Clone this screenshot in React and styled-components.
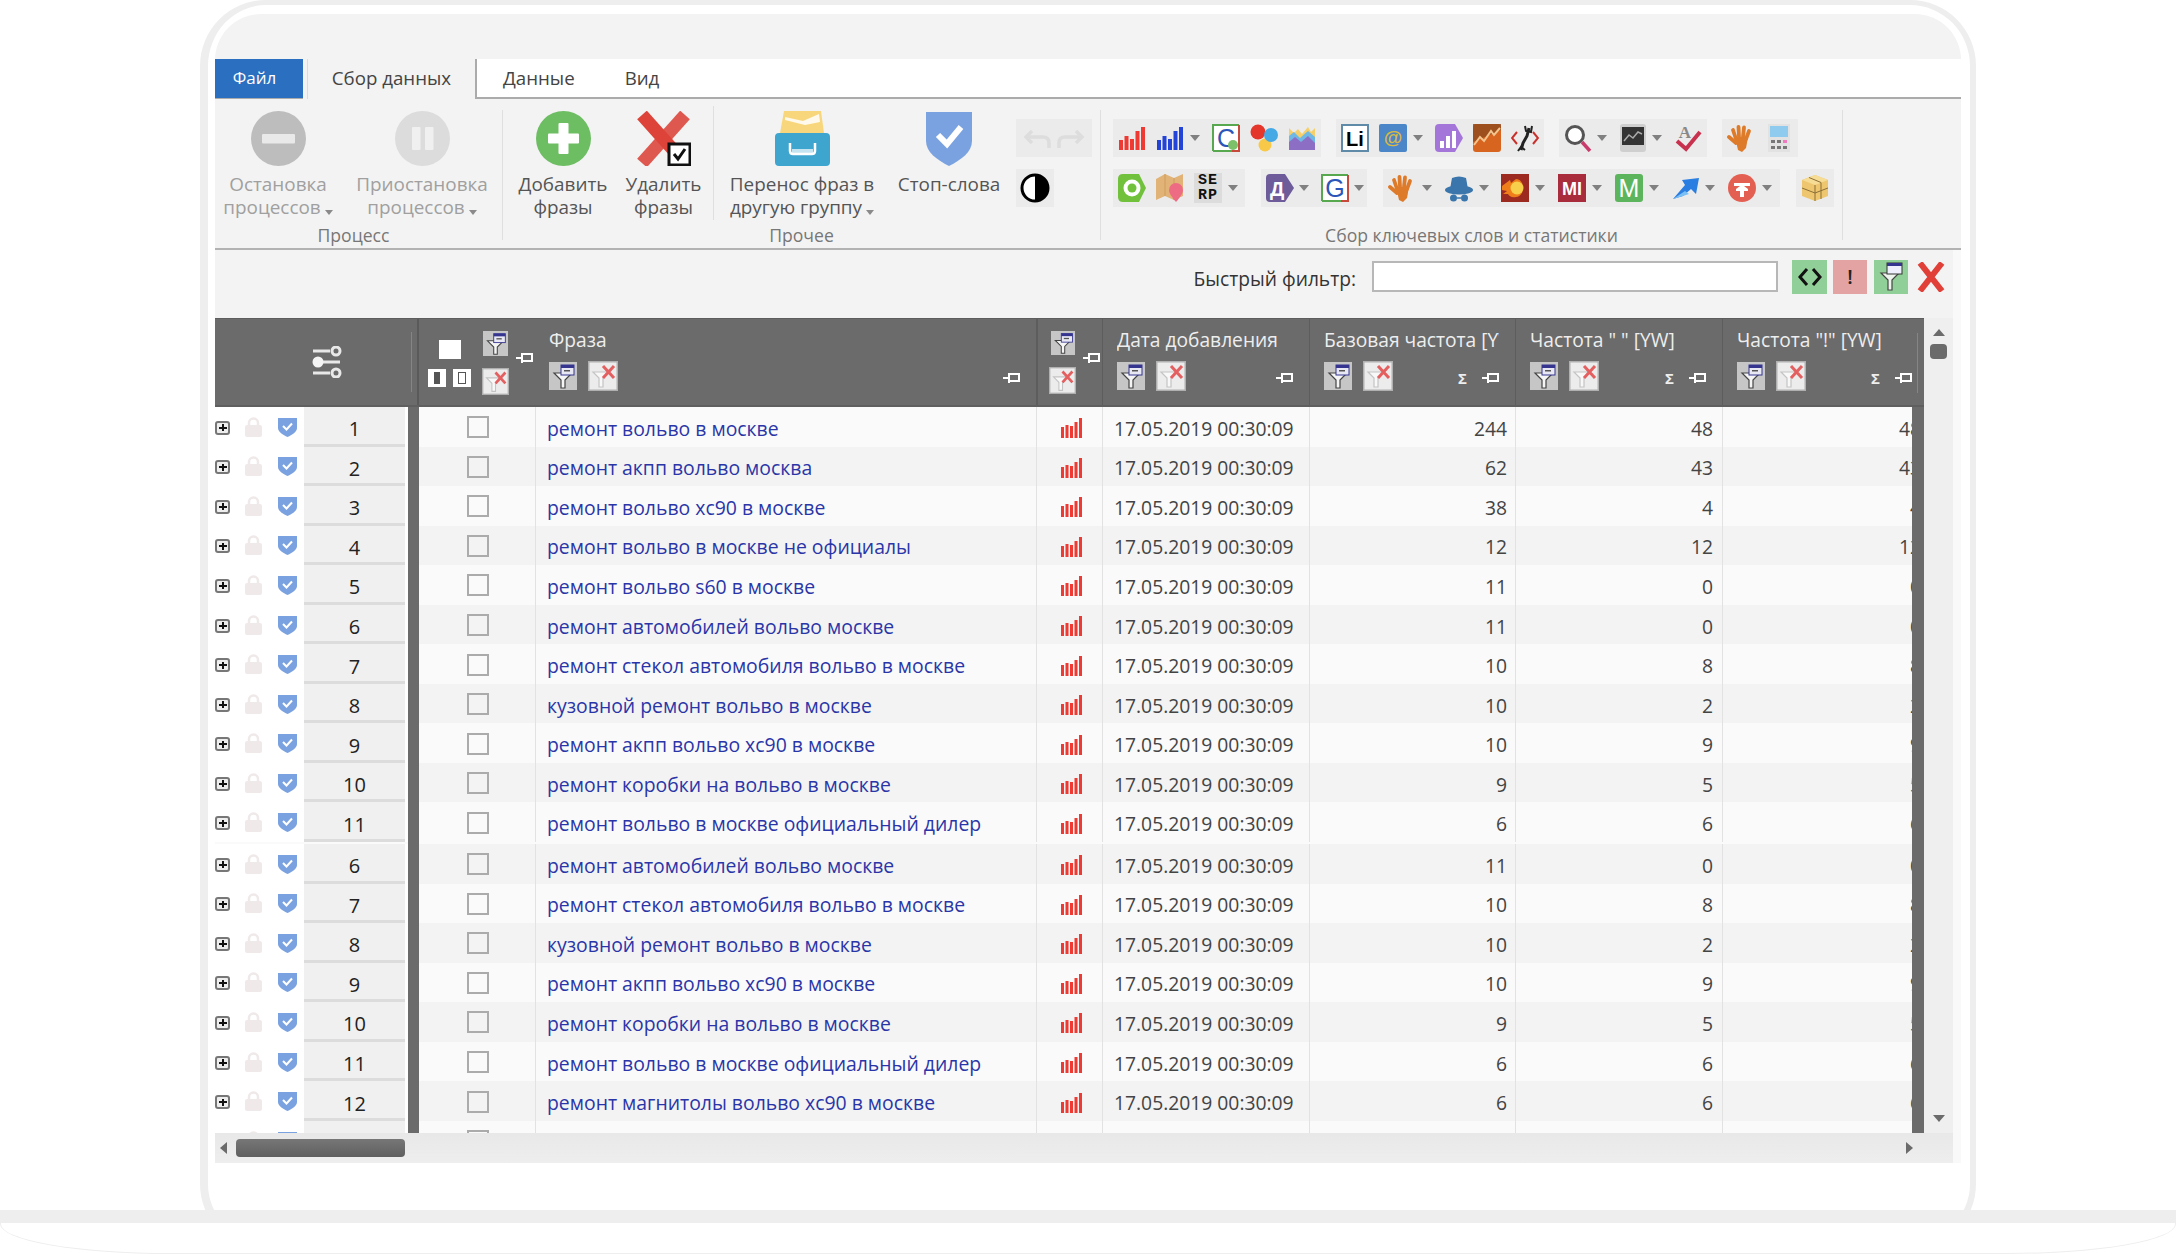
import React from "react";
import styled, { createGlobalStyle } from "styled-components";

const Global = createGlobalStyle`
  html, body { margin: 0; padding: 0; background: #fff; }
  body { width: 2176px; height: 1254px; overflow: hidden; font-family: "Open Sans", "Noto Sans", sans-serif; }
  #root { width: 2176px; height: 1254px; }
  * { box-sizing: border-box; }
  svg { display: block; flex: none; }
`;

const Page = styled.div`width: 2176px; height: 1254px; background: #fff; overflow: hidden;`;
const FrameClip = styled.div`height: 1210px; padding: 0 200px; overflow: hidden;`;
const Frame = styled.div`
  width: 1776px; height: 1250px;
  border: solid #eeeeee; border-width: 5px 6px 8px 8px; border-radius: 66px;
  padding: 9px 9px 0 7px; background: #fff;
`;
const Window = styled.div`width: 1746px; background: #f3f3f3; border-radius: 46px 46px 0 0;`;
const BaseBar = styled.div`height: 13px; background: #eeeeee;`;
const BaseFoot = styled.div`
  height: 31px; background: #fff; border: 1px solid #eeeeee; border-top: none;
  border-radius: 0 0 170px 170px / 0 0 30px 30px;
`;

const TitleGap = styled.div`height: 45px;`;
const TabBar = styled.div`
  height: 40px; background: #fff; border-bottom: 2px solid #ababab;
  display: flex; align-items: stretch; font-size: 18.7px; line-height: 38px; color: #444;
`;
const FileTab = styled.div`
  width: 88px; margin-bottom: -1px; background: #2b6fc1; color: #fff; text-align: center; font-size: 17px;
  padding-right: 9px;
`;
const TabSpacer = styled.div`width: 4px; background: #f3f3f3; margin-bottom: -2px;`;
const ActiveTab = styled.div`
  width: 170px; margin-bottom: -2px; background: #f3f3f3; color: #444; text-align: center;
  border-left: 1px solid #dcdcdc; border-right: 2px solid #ababab;
`;
const PlainTab = styled.div`margin-left: ${p => p.$ml}px;`;

const Ribbon = styled.div`
  height: 151px; padding-top: 11px; display: flex; align-items: flex-start;
  border-bottom: 2px solid #b2b2b2; background: #f3f3f3;
`;
const Group = styled.div`
  width: ${p => p.$w}px; height: 130px; border-right: 1px solid #dfdfdf; flex: none;
`;
const GroupBody = styled.div`height: 113px; display: flex; align-items: flex-start; padding-left: ${p => p.$pl || 0}px;`;
const GroupLabel = styled.div`
  font-size: 17.6px; line-height: 24px; color: #777; text-align: center; padding-right: ${p => p.$pr || 0}px;
`;
const BigButton = styled.div`
  width: ${p => p.$w}px; flex: none; display: flex; flex-direction: column; align-items: center;
  color: ${p => (p.$off ? "#a0a0a0" : "#555")};
  font-size: 18.9px; line-height: 23px; text-align: center; white-space: nowrap;
  margin-left: ${p => p.$ml || 0}px;
  svg { margin-bottom: 7px; margin-top: 1px; }
`;
const Caret = styled.span`
  display: inline-block; width: 0; height: 0; margin-left: 4px; vertical-align: -1px;
  border-left: 4px solid transparent; border-right: 4px solid transparent; border-top: 5px solid #8a8a8a;
`;
const InnerRule = styled.div`width: 1px; height: 114px; margin: -4px 0 0 9px; background: #dfdfdf; flex: none;`;
const SmallStack = styled.div`display: flex; flex-direction: column; gap: 12px; padding-top: 9px; margin-left: 8px; align-items: flex-start;`;
const ToolRows = styled.div`display: flex; flex-direction: column; gap: 12px; padding-top: 9px;`;
const ToolRow = styled.div`display: flex; gap: ${p => p.$gap || 15}px;`;
const ToolGroup = styled.div`
  height: 38px; width: ${p => p.$w}px; background: #ebebeb; display: flex; align-items: center; flex: none;
`;
const Tool = styled.div`width: ${p => p.$w || 38}px; height: 38px; flex: none; display: flex; align-items: center; justify-content: center;`;
const Drop = styled.div`
  flex: 1; height: 38px; display: flex; align-items: center; justify-content: center; padding-right: 7px;
  &::after {
    content: ""; width: 0; height: 0; border-left: 5px solid transparent; border-right: 5px solid transparent;
    border-top: 6px solid #808080;
  }
`;

const Main = styled.div`border-right: 8px solid #f9f9f9;`;
const FilterBar = styled.div`
  height: 68px; display: flex; align-items: center; justify-content: flex-end; padding: 0 8px 15px 0; background: #f3f3f3;
`;
const FilterLabel = styled.div`font-size: 19.2px; color: #333; margin-right: 16px; padding-top: 3px;`;
const FilterInput = styled.div`width: 406px; height: 31px; background: #fff; border: 2px solid #b7b7b7; margin-right: 14px;`;
const FilterBtn = styled.div`
  width: ${p => p.$w}px; height: 34px; margin-right: ${p => p.$mr}px; background: ${p => p.$bg};
  display: flex; align-items: center; justify-content: center;
  font-size: 20px; font-weight: 600; color: #222;
`;
const FilterClose = styled.div`width: 28px; height: 34px; display: flex; align-items: center; justify-content: center;`;

const TableRow = styled.div`display: flex; height: 815px;`;
const TableArea = styled.div`width: 1709px; flex: none; display: flex; flex-direction: column; overflow: hidden;`;
const cols = "204px 117px 501px 66px 207px 206px 207px 201px";
const HeadRow = styled.div`
  height: 89px; flex: none; display: grid; grid-template-columns: ${cols}; background: #6b6b6b;
  border-top: 1px solid #5d5d5d; border-bottom: 2px solid #5f5f5f;
`;
const HeadCell = styled.div`
  position: relative; min-width: 0; padding: 7px ${p => p.$pr ?? 14}px 0 ${p => p.$pl ?? 14}px; color: #eeeeee;
  border-right: ${p => (p.$noline ? "none" : "1px solid #5d5d5d")};
`;
const GutterHead = styled.div`
  display: flex; align-items: center; padding-left: 97px; border-right: 2px solid #5a5a5a;
`;
const HeadRule = styled.div`width: 1px; height: 60px; margin-left: auto; margin-right: 5px; background: #858585;`;
const HeadTitle = styled.div`font-size: 19.2px; line-height: 28px; white-space: nowrap; overflow: hidden; height: 28px;`;
const HeadTools = styled.div`display: flex; align-items: center; height: 30px; margin-top: 7px; gap: 11px;`;
const HeadEnd = styled.div`display: flex; align-items: center; gap: 15px; margin-left: auto; padding-top: 4px; font-size: 15px; line-height: 20px; font-weight: 700;`;
const CheckHead = styled.div`display: flex; align-items: flex-start; padding: 12px 0 0 9px;`;
const ChartHead = styled(CheckHead)`border-left: 1px solid #5d5d5d; border-right: 1px solid #5d5d5d; padding-left: 11px;`;
const SquareStack = styled.div`width: 43px; display: flex; flex-direction: column; align-items: center; padding-top: 9px;`;
const BigSquare = styled.div`width: 22px; height: 19px; background: #fff;`;
const SmallSquares = styled.div`display: flex; justify-content: space-between; width: 100%; margin-top: 10px;`;
const SmallSquare = styled.div`
  width: 18px; height: 18px; background: #fff; display: flex; align-items: center; justify-content: center;
  &::after { content: ""; width: ${p => p.$w}px; height: 10px; background: ${p => p.$fill}; border: 1px solid #555; }
`;
const FunnelStack = styled.div`display: flex; flex-direction: column; align-items: center; gap: 12px; width: 27px; margin-left: ${p => p.$ml ?? 11}px;`;
const PinSlot = styled.div`margin-left: 7px; padding-top: 20px;`;
const EdgeRule = styled.div`position: absolute; right: 6px; top: 14px; width: 1px; height: 60px; background: #858585;`;

const Body = styled.div`position: relative; flex: 1; overflow: hidden; background: #fafafa;`;
const DarkEdge = styled.div`position: absolute; top: 0; bottom: 0; right: 0; width: 12px; background: #6b6b6b;`;
const DarkGutterEdge = styled.div`position: absolute; top: 0; bottom: 0; left: 193px; width: 11px; background: #6b6b6b;`;
const Row = styled.div`
  display: grid; grid-template-columns: ${cols}; height: 39.55px; margin-top: ${p => (p.$gap ? 2 : 0)}px;
  background: ${p => (p.$alt ? "#f3f3f3" : "#fafafa")}; font-size: 19.3px; color: #444;
`;
const GutterCell = styled.div`display: flex; background: #fff; height: 100%;`;
const GutterIcons = styled.div`width: 89px; display: flex; align-items: center; gap: 15px; flex: none;`;
const PlusBox = styled.div`
  width: 15px; height: 14px; margin-top: 2px; border: 2px solid #777; border-radius: 3px; background: #eee; position: relative; flex: none;
  &::before { content: ""; position: absolute; left: 1.5px; right: 1.5px; top: 4px; height: 2px; background: #111; }
  &::after { content: ""; position: absolute; top: 1.5px; bottom: 1.5px; left: 4.5px; width: 2px; background: #111; }
`;
const NumCell = styled.div`
  width: 101px; flex: none; background: #f0f0f0; border-bottom: 3px solid #dcdcdc;
  display: flex; align-items: center; justify-content: center; font-size: 20px; color: #222; padding-top: 7px;
`;
const Cell = styled.div`
  display: flex; align-items: center; min-width: 0; overflow: hidden; white-space: nowrap;
  border-right: ${p => (p.$noline ? "none" : "1px solid #e2e2e2")};
  justify-content: ${p => p.$j || "flex-start"};
  padding: 3px ${p => p.$pr || 0}px 0 ${p => p.$pl || 0}px;
  color: ${p => p.$c || "inherit"};
  font-size: ${p => p.$fs || 19.3}px;
`;
const CheckBox = styled.div`width: 22px; height: 22px; border: 2px solid #ababab; margin-top: -2px; background: transparent;`;

const VScroll = styled.div`width: 29px; flex: none; background: #efefef; display: flex; flex-direction: column; align-items: center;`;
const ArrowUp = styled.div`margin-top: 11px; width: 0; height: 0; border-left: 6px solid transparent; border-right: 6px solid transparent; border-bottom: 7px solid #6b6b6b;`;
const ArrowDown = styled.div`margin-top: auto; margin-bottom: 11px; width: 0; height: 0; border-left: 6px solid transparent; border-right: 6px solid transparent; border-top: 7px solid #6b6b6b;`;
const VThumb = styled.div`margin-top: 8px; width: 17px; height: 15px; border-radius: 4px; background: #6b6b6b;`;
const HScroll = styled.div`
  height: 30px; display: flex; align-items: center; padding: 0 40px 0 5px;
  background: linear-gradient(#e8e8e8, #eeeeee);
`;
const ArrowLeft = styled.div`width: 0; height: 0; border-top: 6px solid transparent; border-bottom: 6px solid transparent; border-right: 7px solid #6b6b6b;`;
const ArrowRight = styled.div`margin-left: auto; width: 0; height: 0; border-top: 6px solid transparent; border-bottom: 6px solid transparent; border-left: 7px solid #6b6b6b;`;
const HThumb = styled.div`margin-left: 9px; width: 169px; height: 18px; border-radius: 4px; background: linear-gradient(#777, #5f5f5f);`;

/* ---------- big ribbon icons ---------- */
const IcStop = () => (<svg width="55" height="55" viewBox="0 0 55 55"><circle cx="27.5" cy="27.5" r="27.5" fill="#bdbdbd"/><rect x="11" y="23" width="33" height="9.5" rx="1" fill="#e9e9e9"/></svg>);
const IcPause = () => (<svg width="55" height="55" viewBox="0 0 55 55"><circle cx="27.5" cy="27.5" r="27.5" fill="#dcdcdc"/><rect x="17" y="16" width="8.5" height="23" rx="1" fill="#f0f0f0"/><rect x="30" y="16" width="8.5" height="23" rx="1" fill="#f0f0f0"/></svg>);
const IcAdd = () => (<svg width="55" height="55" viewBox="0 0 55 55"><circle cx="27.5" cy="27.5" r="27.5" fill="#6dbd63"/><rect x="12" y="22.5" width="31" height="10" rx="1" fill="#fff"/><rect x="22.5" y="12" width="10" height="31" rx="1" fill="#fff"/></svg>);
const IcDelete = () => (<svg width="55" height="55" viewBox="0 0 55 55"><path d="M6 4 L49 52" stroke="#dd4339" strokeWidth="13"/><path d="M49 4 L6 52" stroke="#dd4339" strokeWidth="13" opacity=".88"/><rect x="33" y="33" width="21" height="21" fill="#fff" stroke="#111" strokeWidth="3"/><path d="M38 43 l4 5 l7 -10" fill="none" stroke="#111" strokeWidth="3"/></svg>);
const IcMove = () => (<svg width="55" height="55" viewBox="0 0 55 55"><path d="M9 0 H46 L49 22 H5 Z" fill="#f8d77c"/><path d="M10 6 L28 10 L44 3 L45 11 L30 14 L10 9 Z" fill="#fff" opacity=".85"/><rect x="0" y="22" width="55" height="33" rx="4" fill="#3ea5cf"/><path d="M15 32 V40 Q15 43 18 43 H37 Q40 43 40 40 V32" fill="none" stroke="#fff" strokeWidth="2.5"/><rect x="17" y="38" width="21" height="4" fill="#fff" opacity=".7"/></svg>);
const IcShield = () => (<svg width="48" height="55" viewBox="0 0 48 55"><path d="M1 1 H47 V30 C47 41 36 49 24 55 C12 49 1 41 1 30 Z" fill="#7ba2e0"/><path d="M13 24 L22 33 L36 16" fill="none" stroke="#fff" strokeWidth="6"/></svg>);

/* ---------- small icons ---------- */
const Bars = ({ c }) => (<svg width="28" height="28" viewBox="0 0 28 28"><g fill={c}><rect x="1" y="16" width="4" height="10"/><rect x="6.5" y="12" width="4" height="14"/><rect x="12" y="15" width="4" height="11"/><rect x="17.5" y="7" width="4" height="19"/><rect x="23" y="3" width="4" height="23"/></g></svg>);
const IcSquareC = ({ ch, dot }) => (<svg width="28" height="28" viewBox="0 0 28 28"><rect x="1" y="1" width="26" height="26" fill="#fff"/><path d="M1 27 V1 H27" fill="none" stroke="#58a84f" strokeWidth="2"/><path d="M1 27 H20" stroke="#58a84f" strokeWidth="2"/><path d="M27 1 V27 H20" fill="none" stroke="#c84a3c" strokeWidth="2"/><text x="14" y="23" textAnchor="middle" fontFamily="Liberation Sans" fontSize="25" fill="#2b55b8">{ch}</text>{dot && <circle cx="21" cy="21" r="5" fill="#7cc06a"/>}</svg>);
const IcColors = () => (<svg width="28" height="28" viewBox="0 0 28 28"><circle cx="15" cy="21" r="6.5" fill="#f8c948"/><circle cx="8" cy="8" r="7.5" fill="#e5362c"/><circle cx="21" cy="11" r="7" fill="#45a9e6"/></svg>);
const IcWaves = () => (<svg width="28" height="28" viewBox="0 0 28 28"><path d="M1 26 V4 L6 9 L10 5 L14 10 L20 3 L23 8 L27 4 V26 Z" fill="#f4cf6a"/><path d="M1 26 V12 L6 8 L12 14 L20 7 L27 13 V26 Z" fill="#6fb7e4"/><path d="M1 26 V18 L7 13 L13 18 L20 12 L27 19 V26 Z" fill="#8c6fc4"/></svg>);
const IcLi = () => (<svg width="28" height="28" viewBox="0 0 28 28"><rect x="1" y="1" width="26" height="26" fill="#fff" stroke="#5f8aa8" strokeWidth="2"/><text x="14" y="22" textAnchor="middle" fontFamily="Liberation Sans" fontWeight="700" fontSize="20" fill="#000">Li</text></svg>);
const IcAt = () => (<svg width="28" height="28" viewBox="0 0 28 28"><rect width="28" height="28" rx="2" fill="#4a86c8"/><text x="14" y="20" textAnchor="middle" fontFamily="Liberation Sans" fontWeight="700" fontSize="19" fill="#dcb93f">@</text></svg>);
const IcPurple = () => (<svg width="28" height="28" viewBox="0 0 28 28"><path d="M4 0 H20 L28 14 L20 28 H4 Q0 28 0 24 V4 Q0 0 4 0 Z" fill="#a476da"/><g fill="#fff"><rect x="5" y="17" width="4" height="7"/><rect x="11" y="12" width="4" height="12"/><rect x="17" y="7" width="4" height="17"/></g></svg>);
const IcTrend = () => (<svg width="28" height="28" viewBox="0 0 28 28"><rect width="28" height="28" rx="3" fill="#d8651f"/><path d="M0 0 H28 V6 L0 18 Z" fill="#8f4a1d" opacity=".8"/><path d="M1 21 L7 13 L11 17 L18 7 L21 11 L27 4" fill="none" stroke="#f3c48e" strokeWidth="2"/></svg>);
const IcWrench = () => (<svg width="28" height="28" viewBox="0 0 28 28"><path d="M6 8 L1 14 L6 20 M22 8 L27 14 L22 20" fill="none" stroke="#c9302c" strokeWidth="2"/><path d="M18 4 L16 12 L12 19 L10 26" fill="none" stroke="#222" strokeWidth="3"/><path d="M14 2 L15 7 L20 8 L21 2 M7 27 L10 23 L14 26" fill="none" stroke="#222" strokeWidth="2"/></svg>);
const IcSearch = () => (<svg width="28" height="28" viewBox="0 0 28 28"><circle cx="11" cy="11" r="8.5" fill="#fff" stroke="#555" strokeWidth="3"/><path d="M18 18 L26 27" stroke="#c93b6d" strokeWidth="3.5"/></svg>);
const IcMonitor = () => (<svg width="28" height="28" viewBox="0 0 28 28"><rect x="1" y="0" width="26" height="28" rx="3" fill="#cfcfcf"/><rect x="3" y="3" width="22" height="18" fill="#333"/><path d="M5 17 L10 11 L14 14 L19 8 L23 10" fill="none" stroke="#aaa" strokeWidth="1.5"/></svg>);
const IcCheckA = () => (<svg width="28" height="28" viewBox="0 0 28 28"><text x="11" y="14" textAnchor="middle" fontFamily="Liberation Serif" fontWeight="700" fontSize="17" fill="#888">A</text><path d="M3 17 L12 25 L26 8" fill="none" stroke="#c8324f" strokeWidth="4"/></svg>);
const IcHand = () => (<svg width="28" height="28" viewBox="0 0 28 28"><g fill="none" stroke="#de7b2a" strokeWidth="3.8" strokeLinecap="round"><path d="M9 15 L6 6"/><path d="M12 13 L11.5 3"/><path d="M16 13 L17 3.5"/><path d="M19 15 L22 7"/><path d="M9 19 L2 13"/></g><path d="M8 13 H21 L19 24 L15 28 L11 26 Z" fill="#de7b2a"/></svg>);
const IcCalc = () => (<svg width="28" height="28" viewBox="0 0 28 28"><rect x="3" y="0" width="22" height="28" fill="#e2e2e2"/><rect x="5" y="2" width="18" height="11" fill="#8fcbef"/><g fill="#777"><rect x="6" y="16" width="4" height="3"/><rect x="12" y="16" width="4" height="3"/><rect x="6" y="22" width="4" height="3"/><rect x="12" y="22" width="4" height="3"/><rect x="18" y="22" width="4" height="3"/></g><rect x="18" y="16" width="4" height="3" fill="#ef7ac0"/></svg>);
const IcOk = () => (<svg width="28" height="28" viewBox="0 0 28 28"><path d="M5 0 H21 L28 14 L21 28 H5 Q0 28 0 23 V5 Q0 0 5 0 Z" fill="#71c13c"/><circle cx="14" cy="14" r="8.5" fill="#fff"/><circle cx="14" cy="14" r="4.5" fill="#71c13c"/></svg>);
const IcMap = () => (<svg width="28" height="28" viewBox="0 0 28 28"><path d="M0 5 L9 0 L18 4 L27 0 V22 L18 26 L9 22 L0 26 Z" fill="#e1b377"/><path d="M9 0 V22 M18 4 V26" stroke="#cf9c5e" strokeWidth="1"/><path d="M20 28 C15 22 13 19 13 16 A7 7 0 0 1 27 16 C27 19 25 22 20 28 Z" fill="#ee6b84"/></svg>);
const SerpText = styled.div`
  width: 28px; height: 30px; background: #dcdcdc; color: #111; font: 700 15px/15px "Liberation Mono", monospace;
  text-align: center; letter-spacing: 1px;
`;
const IcSerp = () => (<SerpText>SE<br/>RP</SerpText>);
const IcD = () => (<svg width="28" height="28" viewBox="0 0 28 28"><path d="M4 0 H19 L28 14 L19 28 H4 Q0 28 0 24 V4 Q0 0 4 0 Z" fill="#6d5b9a"/><text x="11" y="22" textAnchor="middle" fontFamily="Liberation Sans" fontWeight="700" fontSize="20" fill="#fff">Д</text></svg>);
const IcHat = () => (<svg width="28" height="28" viewBox="0 0 28 28"><path d="M7 4 Q14 1 21 4 L23 15 H5 Z" fill="#3a76ac"/><ellipse cx="14" cy="16" rx="14" ry="4.5" fill="#3a76ac"/><circle cx="8.5" cy="24" r="3.5" fill="#3a76ac"/><circle cx="19.5" cy="24" r="3.5" fill="#3a76ac"/><path d="M12 24 H16" stroke="#3a76ac" strokeWidth="1.5"/></svg>);
const IcFire = () => (<svg width="28" height="28" viewBox="0 0 28 28"><rect width="28" height="28" fill="#9c2a20"/><path d="M1 12 L9 6 L10 9 L15 5 C24 5 25 22 15 23 C11 24 8 22 7 20 L2 20 L6 17 L1 16 Z" fill="#ef7d1a"/><circle cx="16" cy="14" r="6.5" fill="#f8cf4a"/></svg>);
const IcMi = () => (<svg width="28" height="28" viewBox="0 0 28 28"><rect width="28" height="28" fill="#a82c3c"/><text x="14" y="21" textAnchor="middle" fontFamily="Liberation Sans" fontWeight="700" fontSize="18" fill="#fff">MI</text></svg>);
const IcM = () => (<svg width="28" height="28" viewBox="0 0 28 28"><rect width="28" height="28" rx="3" fill="#5cb55c"/><text x="14" y="23" textAnchor="middle" fontFamily="Liberation Sans" fontSize="25" fill="#fff">M</text></svg>);
const IcArrowUp = () => (<svg width="28" height="28" viewBox="0 0 28 28"><path d="M1 25 L13 11 L10 6 L27 4 L24 20 L19 15 L11 22 Z" fill="#2a7de1"/><path d="M1 25 L13 17 L17 20 L11 22 Z" fill="#7bc0f5"/></svg>);
const IcTCircle = () => (<svg width="28" height="28" viewBox="0 0 28 28"><circle cx="14" cy="14" r="14" fill="#e35f52"/><path d="M6 9 H22 V12 H16 L20 15 V17 H16 V23 H12 V17 H8 V15 L12 12 H6 Z" fill="#fff"/></svg>);
const IcBox = () => (<svg width="28" height="28" viewBox="0 0 28 28"><path d="M14 1 L27 6 V22 L14 27 L1 22 V6 Z" fill="#edc66f"/><path d="M1 6 L14 11 L27 6 L14 1 Z" fill="#f6dc94"/><path d="M1 14 L14 19 L27 14 M8 3.5 L20 8.5 V25 M14 11 V27" fill="none" stroke="#8b6f37" strokeWidth="1"/></svg>);
const IcUndo = () => (<svg width="62" height="28" viewBox="0 0 62 28"><g fill="none" stroke="#dddddd" strokeWidth="3.5"><path d="M3 13 H20 Q26 13 26 19 V24"/><path d="M9 7 L3 13 L9 19"/><path d="M59 13 H42 Q36 13 36 19 V24"/><path d="M53 7 L59 13 L53 19"/></g></svg>);
const IcContrast = () => (<svg width="30" height="30" viewBox="0 0 30 30"><circle cx="15" cy="15" r="13" fill="#fff" stroke="#000" strokeWidth="3"/><path d="M15 2 A13 13 0 0 1 15 28 Z" fill="#000"/></svg>);

/* ---------- grid icons ---------- */
const Funnel = ({ s = 28 }) => (<svg width={s} height={s} viewBox="0 0 28 28"><rect width="28" height="28" fill="#c6c6c6"/><path d="M5 11 H23 L16 18 V26 H12 V18 Z" fill="#f5f5f5" stroke="#444" strokeWidth="1.2"/><rect x="12" y="3" width="13" height="10" fill="#e8e8f4" stroke="#35358f" strokeWidth="1"/><rect x="12" y="3" width="13" height="3" fill="#35358f"/><rect x="15" y="8" width="6" height="1.5" fill="#555"/></svg>);
const FunnelX = ({ s = 30 }) => (<svg width={s} height={s} viewBox="0 0 30 30"><rect x=".75" y=".75" width="28.5" height="28.5" fill="#ececec" stroke="#b0b0b0" strokeWidth="1.5"/><path d="M5 11 H20 L15 17 V26 H11 V17 Z" fill="#f8f8f8" stroke="#c4c4c4" strokeWidth="1.2"/><path d="M15 5 L26 17 M26 5 L15 17" stroke="#e46060" strokeWidth="3"/></svg>);
const Pin = () => (<svg width="17" height="14" viewBox="0 0 17 14"><path d="M0 7 H5" stroke="#fff" strokeWidth="2"/><path d="M6 2 V12" stroke="#fff" strokeWidth="2"/><rect x="6" y="3" width="10" height="7" fill="none" stroke="#fff" strokeWidth="2"/></svg>);
const Sliders = () => (<svg width="30" height="32" viewBox="0 0 30 32"><g stroke="#e8e8e8" fill="none" strokeWidth="3"><path d="M1 5 H18"/><circle cx="24" cy="5" r="4"/><path d="M10 16 H28"/><path d="M1 27 H18"/><circle cx="24" cy="27" r="4"/></g><circle cx="6" cy="16" r="5.5" fill="#f4f4f4"/></svg>);
const Lock = () => (<svg width="17" height="20" viewBox="0 0 17 20"><path d="M4 9 V6 A4.5 4.5 0 0 1 13 6 V9" fill="none" stroke="#f0e9e9" strokeWidth="2.5"/><rect y="8" width="17" height="12" rx="2" fill="#f0e9e9"/></svg>);
const MiniShield = () => (<svg width="19" height="20" viewBox="0 0 19 20" style={{ marginLeft: 1 }}><path d="M0 1 H19 V11 C19 15 14 18 9.5 20 C5 18 0 15 0 11 Z" fill="#7ba2e0"/><path d="M5 9 L8.5 12.5 L14 6.5" fill="none" stroke="#fff" strokeWidth="2"/></svg>);
const RowBars = () => (<svg width="22" height="20" viewBox="0 0 22 20"><g fill="#ee3a33"><rect x="0" y="9" width="3" height="11"/><rect x="4.5" y="7" width="3" height="13"/><rect x="9" y="8" width="3" height="12"/><rect x="13.5" y="4" width="3" height="16"/><rect x="18" y="0" width="3" height="20"/></g></svg>);
const GreenFunnel = () => (<svg width="26" height="30" viewBox="0 0 26 30"><path d="M3 11 H21 L14 18 V28 H10 V18 Z" fill="#eef5ee" stroke="#444" strokeWidth="1.2"/><rect x="9" y="1" width="15" height="11" fill="#eef" stroke="#333" strokeWidth="1"/><rect x="9" y="1" width="15" height="3" fill="#35358f"/></svg>);
const Chevrons = () => (<svg width="26" height="20" viewBox="0 0 26 20"><path d="M10 2 L3 10 L10 18 M16 2 L23 10 L16 18" fill="none" stroke="#111" strokeWidth="3"/></svg>);
const BigX = () => (<svg width="28" height="30" viewBox="0 0 28 30"><path d="M3 1 L25 29 M25 1 L3 29" stroke="#e04038" strokeWidth="6"/></svg>);

const rows = [
  [1, "ремонт вольво в москве", 244, 48, 48],
  [2, "ремонт акпп вольво москва", 62, 43, 43],
  [3, "ремонт вольво хс90 в москве", 38, 4, 4],
  [4, "ремонт вольво в москве не официалы", 12, 12, 12],
  [5, "ремонт вольво s60 в москве", 11, 0, 0],
  [6, "ремонт автомобилей вольво москве", 11, 0, 0],
  [7, "ремонт стекол автомобиля вольво в москве", 10, 8, 8],
  [8, "кузовной ремонт вольво в москве", 10, 2, 2],
  [9, "ремонт акпп вольво хс90 в москве", 10, 9, 9],
  [10, "ремонт коробки на вольво в москве", 9, 5, 5],
  [11, "ремонт вольво в москве официальный дилер", 6, 6, 6],
  [6, "ремонт автомобилей вольво москве", 11, 0, 0],
  [7, "ремонт стекол автомобиля вольво в москве", 10, 8, 8],
  [8, "кузовной ремонт вольво в москве", 10, 2, 2],
  [9, "ремонт акпп вольво хс90 в москве", 10, 9, 9],
  [10, "ремонт коробки на вольво в москве", 9, 5, 5],
  [11, "ремонт вольво в москве официальный дилер", 6, 6, 6],
  [12, "ремонт магнитолы вольво хс90 в москве", 6, 6, 6],
];

const NumHead = ({ title, pr = 16 }) => (
  <HeadCell $pl={14} $pr={pr}>
    <HeadTitle>{title}</HeadTitle>
    <HeadTools>
      <Funnel />
      <FunnelX />
      <HeadEnd>Σ<Pin /></HeadEnd>
    </HeadTools>
  </HeadCell>
);

const T = ({ children }) => <Tool>{children}</Tool>;

export default function App() {
  return (
    <Page>
      <Global />
      <FrameClip>
        <Frame>
          <Window>
            <TitleGap />
            <TabBar>
              <FileTab>Файл</FileTab>
              <TabSpacer />
              <ActiveTab>Сбор данных</ActiveTab>
              <PlainTab $ml={26}>Данные</PlainTab>
              <PlainTab $ml={50}>Вид</PlainTab>
            </TabBar>
            <Ribbon>
              <Group $w={288}>
                <GroupBody>
                  <BigButton $w={126} $off><IcStop />Остановка<span>процессов<Caret /></span></BigButton>
                  <BigButton $w={162} $off><IcPause />Приостановка<span>процессов<Caret /></span></BigButton>
                </GroupBody>
                <GroupLabel $pr={10}>Процесс</GroupLabel>
              </Group>
              <Group $w={598}>
                <GroupBody>
                  <BigButton $w={120}><IcAdd />Добавить<span>фразы</span></BigButton>
                  <BigButton $w={81}><IcDelete />Удалить<span>фразы</span></BigButton>
                  <InnerRule />
                  <BigButton $w={176}><IcMove />Перенос фраз в<span>другую группу<Caret /></span></BigButton>
                  <BigButton $w={118}><IcShield />Стоп-слова</BigButton>
                  <SmallStack>
                    <ToolGroup $w={76}><Tool $w={76}><IcUndo /></Tool></ToolGroup>
                    <ToolGroup $w={38}><T><IcContrast /></T></ToolGroup>
                  </SmallStack>
                </GroupBody>
                <GroupLabel>Прочее</GroupLabel>
              </Group>
              <Group $w={742}>
                <GroupBody $pl={12}>
                  <ToolRows>
                    <ToolRow>
                      <ToolGroup $w={208}>
                        <T><Bars c="#ee3a33" /></T><T><Bars c="#2444d8" /></T><Drop />
                        <T><IcSquareC ch="C" dot /></T><T><IcColors /></T><T><IcWaves /></T>
                      </ToolGroup>
                      <ToolGroup $w={208}>
                        <T><IcLi /></T><T><IcAt /></T><Drop />
                        <T><IcPurple /></T><T><IcTrend /></T><T><IcWrench /></T>
                      </ToolGroup>
                      <ToolGroup $w={148}>
                        <T><IcSearch /></T><Drop /><T><IcMonitor /></T><Drop /><T><IcCheckA /></T>
                      </ToolGroup>
                      <ToolGroup $w={76}><T><IcHand /></T><T><IcCalc /></T></ToolGroup>
                    </ToolRow>
                    <ToolRow $gap={16}>
                      <ToolGroup $w={132}>
                        <T><IcOk /></T><T><IcMap /></T><T><IcSerp /></T><Drop />
                      </ToolGroup>
                      <ToolGroup $w={106}>
                        <T><IcD /></T><Drop /><T><IcSquareC ch="G" /></T><Drop />
                      </ToolGroup>
                      <ToolGroup $w={397}>
                        <T><IcHand /></T><Drop /><T><IcHat /></T><Drop /><T><IcFire /></T><Drop />
                        <T><IcMi /></T><Drop /><T><IcM /></T><Drop /><T><IcArrowUp /></T><Drop />
                        <T><IcTCircle /></T><Drop />
                      </ToolGroup>
                      <ToolGroup $w={38}><T><IcBox /></T></ToolGroup>
                    </ToolRow>
                  </ToolRows>
                </GroupBody>
                <GroupLabel>Сбор ключевых слов и статистики</GroupLabel>
              </Group>
            </Ribbon>
            <Main>
              <FilterBar>
                <FilterLabel>Быстрый фильтр:</FilterLabel>
                <FilterInput />
                <FilterBtn $w={35} $bg="#90cf97" $mr={6}><Chevrons /></FilterBtn>
                <FilterBtn $w={34} $bg="#e3a3a3" $mr={7}>!</FilterBtn>
                <FilterBtn $w={34} $bg="#90cf97" $mr={9}><GreenFunnel /></FilterBtn>
                <FilterClose><BigX /></FilterClose>
              </FilterBar>
              <TableRow>
                <TableArea>
                  <HeadRow>
                    <GutterHead><Sliders /><HeadRule /></GutterHead>
                    <CheckHead>
                      <SquareStack>
                        <BigSquare />
                        <SmallSquares>
                          <SmallSquare $w={4} $fill="#555" />
                          <SmallSquare $w={6} $fill="#fff" />
                        </SmallSquares>
                      </SquareStack>
                      <FunnelStack><Funnel s={25} /><FunnelX s={27} /></FunnelStack>
                      <PinSlot><Pin /></PinSlot>
                    </CheckHead>
                    <HeadCell $pl={13} $pr={16}>
                      <HeadTitle>Фраза</HeadTitle>
                      <HeadTools><Funnel /><FunnelX /><HeadEnd><Pin /></HeadEnd></HeadTools>
                    </HeadCell>
                    <ChartHead>
                      <FunnelStack $ml={0}><Funnel s={24} /><FunnelX s={27} /></FunnelStack>
                      <PinSlot><Pin /></PinSlot>
                    </ChartHead>
                    <HeadCell $pl={14} $pr={16}>
                      <HeadTitle>Дата добавления</HeadTitle>
                      <HeadTools><Funnel /><FunnelX /><HeadEnd><Pin /></HeadEnd></HeadTools>
                    </HeadCell>
                    <NumHead title="Базовая частота [YW]" />
                    <NumHead title={'Частота " " [YW]'} />
                    <HeadCell $pl={14} $pr={12} $noline>
                      <HeadTitle>{'Частота "!" [YW]'}</HeadTitle>
                      <HeadTools><Funnel /><FunnelX /><HeadEnd>Σ<Pin /></HeadEnd></HeadTools>
                      <EdgeRule />
                    </HeadCell>
                  </HeadRow>
                  <Body>
                    {rows.map((r, i) => (
                      <Row key={i} $alt={i % 2 === 1} $gap={i === 11}>
                        <GutterCell>
                          <GutterIcons><PlusBox /><Lock /><MiniShield /></GutterIcons>
                          <NumCell>{r[0]}</NumCell>
                        </GutterCell>
                        <Cell $pl={48}><CheckBox /></Cell>
                        <Cell $pl={11} $c="#2a36a8" $fs={19.4}>{r[1]}</Cell>
                        <Cell $pl={24}><RowBars /></Cell>
                        <Cell $pl={11}>17.05.2019 00:30:09</Cell>
                        <Cell $j="flex-end" $pr={8}>{r[2]}</Cell>
                        <Cell $j="flex-end" $pr={9}>{r[3]}</Cell>
                        <Cell $j="flex-end" $pr={3} $noline>{r[4]}</Cell>
                      </Row>
                    ))}
                    <Row>
                      <GutterCell>
                        <GutterIcons><PlusBox /><Lock /><MiniShield /></GutterIcons>
                        <NumCell />
                      </GutterCell>
                      <Cell $pl={48}><CheckBox /></Cell>
                      <Cell /><Cell /><Cell /><Cell /><Cell /><Cell $noline />
                    </Row>
                    <DarkGutterEdge />
                    <DarkEdge />
                  </Body>
                </TableArea>
                <VScroll><ArrowUp /><VThumb /><ArrowDown /></VScroll>
              </TableRow>
              <HScroll><ArrowLeft /><HThumb /><ArrowRight /></HScroll>
            </Main>
          </Window>
        </Frame>
      </FrameClip>
      <BaseBar />
      <BaseFoot />
    </Page>
  );
}
